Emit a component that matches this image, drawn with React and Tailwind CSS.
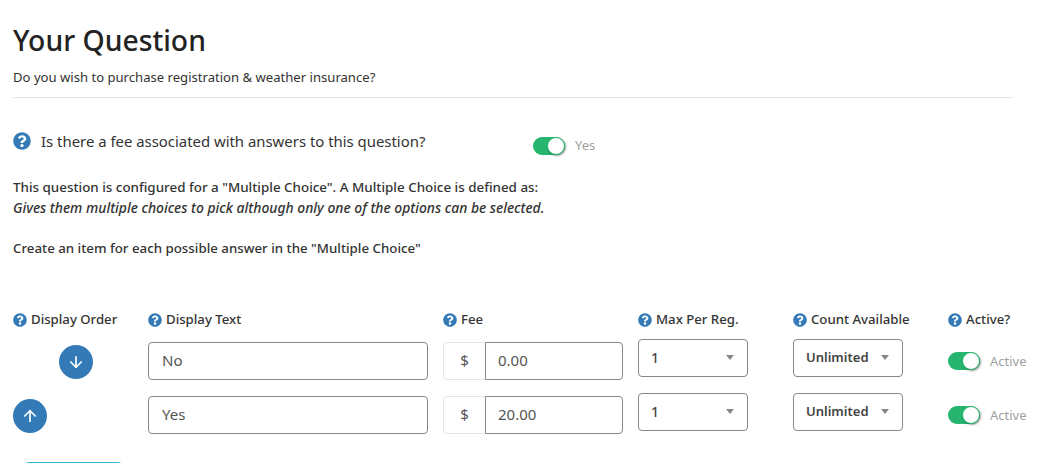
import React from 'react';
import { FaQuestionCircle } from 'react-icons/fa';
import { ArrowDown, ArrowUp } from 'lucide-react';

function Help({ className = 'w-[14px] h-[14px]' }) {
  return <FaQuestionCircle className={`${className} text-[#337ab7] shrink-0`} />;
}

function Toggle({ label }) {
  return (
    <div className="flex items-center gap-[10px]">
      <div className="w-[32px] h-[18px] rounded-full bg-[#25b56f] relative">
        <div className="absolute right-0 top-0 w-[18px] h-[18px] rounded-full bg-white border border-[#25b56f] shadow-[1px_1px_2px_rgba(0,0,0,0.4)]" />
      </div>
      <span className="text-[13px] text-[#a0a0a0]">{label}</span>
    </div>
  );
}

function Select({ value, bold }) {
  return (
    <div className="w-[110px] h-[38px] border border-[#868686] rounded-[4px] flex items-center justify-between pl-[12px] pr-[13px] bg-white">
      <span className={`text-[#444] ${bold ? 'text-[13px] font-semibold' : 'text-[14px] font-medium'}`}>{value}</span>
      <span className="w-0 h-0 border-x-[4px] border-x-transparent border-t-[5px] border-t-[#888]" />
    </div>
  );
}

function Row({ up, text, fee, className }) {
  const Icon = up ? ArrowUp : ArrowDown;
  return (
    <div className={`grid grid-cols-[120px_280px_180px_140px_140px_90px] gap-x-[15px] items-start ${className}`}>
      <button className={`mt-[6px] w-[34px] h-[34px] rounded-full bg-[#337ab7] flex items-center justify-center text-white ${up ? '' : 'ml-[46px]'}`}>
        <Icon className="w-[18px] h-[18px]" strokeWidth={2.25} />
      </button>
      <div className="mt-[3px] h-[38px] border border-[#868686] rounded-[4px] pl-[13px] flex items-center text-[15px] text-[#555]">{text}</div>
      <div className="mt-[3px] h-[38px] flex text-[15px] text-[#555]">
        <div className="w-[42px] border border-r-0 border-[#e6e6e6] rounded-l-[4px] flex items-center justify-center">$</div>
        <div className="flex-1 border border-[#868686] rounded-r-[4px] pl-[12px] flex items-center">{fee}</div>
      </div>
      <Select value="1" />
      <Select value="Unlimited" bold />
      <div className="mt-[13px]">
        <Toggle label="Active" />
      </div>
    </div>
  );
}

function ColHead({ children }) {
  return (
    <div className="flex items-center gap-[4px] text-[13.2px] font-medium text-[#333] whitespace-nowrap">
      <Help />
      {children}
    </div>
  );
}

export default function App() {
  return (
    <div className="h-[463px] overflow-hidden bg-white pl-[13px] font-['Noto_Sans',sans-serif] text-[#222]">
      <div className="w-[1000px] pt-[20px]">
        <h1 className="text-[28.3px] leading-[40px] font-medium text-[#222]">Your Question</h1>
        <p className="mt-[1px] text-[13.1px] leading-[32px] text-[#333]">Do you wish to purchase registration &amp; weather insurance?</p>
        <div className="mt-[4px] border-t border-[#e5e5e5]" />
      </div>

      <div className="mt-[33px] flex items-start">
        <div className="flex items-center gap-[10px] w-[520px] h-[20px]">
          <Help className="w-[18px] h-[18px]" />
          <span className="text-[14.9px] text-[#333]">Is there a fee associated with answers to this question?</span>
        </div>
        <div className="mt-[5px]">
          <Toggle label="Yes" />
        </div>
      </div>

      <div className="mt-[21px] font-medium leading-[20px] text-[#333]">
        <p className="text-[13.4px]">This question is configured for a "Multiple Choice". A Multiple Choice is defined as:</p>
        <p className="mt-[1px] text-[13.9px] italic">Gives them multiple choices to pick although only one of the options can be selected.</p>
        <p className="mt-[20px] text-[13.3px]">Create an item for each possible answer in the "Multiple Choice"</p>
      </div>

      <div className="mt-[52px] grid grid-cols-[120px_280px_180px_140px_140px_90px] gap-x-[15px] h-[20px]">
        <ColHead>Display Order</ColHead>
        <ColHead>Display Text</ColHead>
        <ColHead>Fee</ColHead>
        <ColHead>Max Per Reg.</ColHead>
        <ColHead>Count Available</ColHead>
        <ColHead>Active?</ColHead>
      </div>
      <Row text="No" fee="0.00" className="mt-[9px]" />
      <Row up text="Yes" fee="20.00" className="mt-[13px]" />
      <div className="mt-[28px] ml-[12px] w-[97px] h-[36px] rounded-[4px] bg-[#35b5d0]" />
    </div>
  );
}
